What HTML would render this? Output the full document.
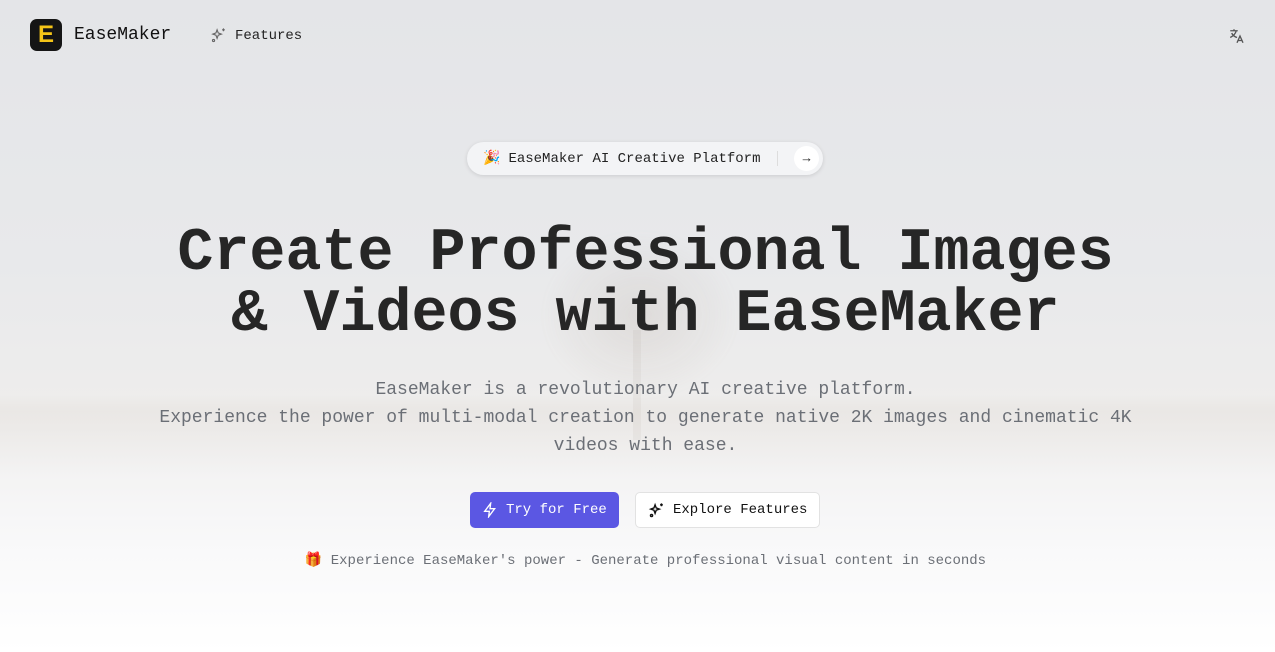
<!DOCTYPE html>
<html><head><meta charset="utf-8"><style>
*{margin:0;padding:0;box-sizing:border-box}
body{width:1275px;height:652px;overflow:hidden;font-family:"Liberation Mono","Noto Sans CJK SC",monospace;color:#222;
background:linear-gradient(180deg,#e4e5e8 0%,#e8e9eb 40%,#eeedec 62%,#f7f7f8 80%,#fff 100%);position:relative}
.tree{position:absolute;left:540px;top:230px;width:200px;height:170px;border-radius:50%;background:radial-gradient(ellipse at center,rgba(150,130,115,.14),rgba(150,130,115,0) 70%);filter:blur(4px)}
.trunk{position:absolute;left:633px;top:330px;width:8px;height:110px;background:rgba(120,100,90,.06)}
.hill{position:absolute;left:0;top:395px;width:1275px;height:80px;background:linear-gradient(180deg,rgba(220,212,205,0),rgba(220,212,205,.25) 20%,rgba(230,225,220,0));}
nav{position:absolute;top:0;left:0;right:0;height:70px}
.logo{position:absolute;left:30px;top:19px;width:32px;height:32px;border-radius:7px;background:#151515;color:#f5c518;font:bold 24px "Liberation Sans",sans-serif;text-align:center;line-height:32px}
.brand{position:absolute;left:74px;top:25px;font-size:18px;color:#111}
.feat{position:absolute;left:210px;top:27px;font-size:14px;color:#222;display:flex;align-items:center;gap:8px}
.tr{position:absolute;left:1228px;top:27px}
.pill{position:absolute;left:467px;top:142px;width:356px;height:33px;border-radius:17px;background:#f3f4f6;box-shadow:0 1px 4px rgba(0,0,0,.12);font-size:14px;display:flex;align-items:center;padding-left:16px;gap:8px}
.pill .sep{position:absolute;left:310px;top:9px;width:1px;height:15px;background:#ddd}
.pill .arr{position:absolute;right:4px;top:4px;width:25px;height:25px;border-radius:50%;background:#fff;display:flex;align-items:center;justify-content:center;font-size:13px}
h1{position:absolute;top:224px;left:8px;width:1275px;text-align:center;font-size:60px;font-weight:bold;line-height:61px;color:#262626}
.sub{position:absolute;top:376px;left:8px;width:1275px;text-align:center;font-size:18px;line-height:28px;color:#6b6f76}
.btn{position:absolute;top:492px;height:36px;border-radius:5px;font-size:14px;display:flex;align-items:center;gap:8px;padding-left:12px}
.b1{left:470px;width:149px;background:#5b57e3;color:#fff}
.b2{left:635px;width:185px;background:#fff;border:1px solid #e2e2e2;color:#111}
.note{position:absolute;top:552px;left:8px;width:1275px;text-align:center;font-size:14px;color:#6b6f76}
</style></head><body>
<div class="hill"></div><div class="tree"></div><div class="trunk"></div>
<nav>
<div class="logo">E</div><div class="brand">EaseMaker</div>
<div class="feat"><svg width="17" height="17" viewBox="0 0 24 24" fill="none" stroke="#666" stroke-width="1.6"><path d="M10 4l1.6 4.4L16 10l-4.4 1.6L10 16l-1.6-4.4L4 10l4.4-1.6z"/><path d="M19 2v4M17 4h4"/><circle cx="5" cy="19" r="1.5"/></svg>Features</div>
<div class="tr"><svg width="18" height="18" viewBox="0 0 24 24" fill="none" stroke="#555" stroke-width="1.8"><path d="M3 5h10M8 3v2M5 8c1 3 4 5 7 6M11 5c-1 4-4 7-8 9M12 21l4-9 4 9M13.5 18h5"/></svg></div>
</nav>
<div class="pill"><span>🎉</span><span>EaseMaker AI Creative Platform</span><div class="sep"></div><div class="arr">→</div></div>
<h1>Create Professional Images<br>&amp; Videos with EaseMaker</h1>
<div class="sub">EaseMaker is a revolutionary AI creative platform.<br>Experience the power of multi-modal creation to generate native 2K images and cinematic 4K<br>videos with ease.</div>
<div class="btn b1"><svg width="16" height="16" viewBox="0 0 24 24" fill="none" stroke="#fff" stroke-width="2"><path d="M13 2L4 14h7l-1 8 9-12h-7z"/></svg>Try for Free</div>
<div class="btn b2"><svg width="17" height="17" viewBox="0 0 24 24" fill="none" stroke="#111" stroke-width="2"><path d="M10 4l1.6 4.4L16 10l-4.4 1.6L10 16l-1.6-4.4L4 10l4.4-1.6z"/><path d="M19 2v4M17 4h4"/><circle cx="5" cy="19" r="1.5"/></svg>Explore Features</div>
<div class="note">🎁 Experience EaseMaker's power - Generate professional visual content in seconds</div>
</body></html>
